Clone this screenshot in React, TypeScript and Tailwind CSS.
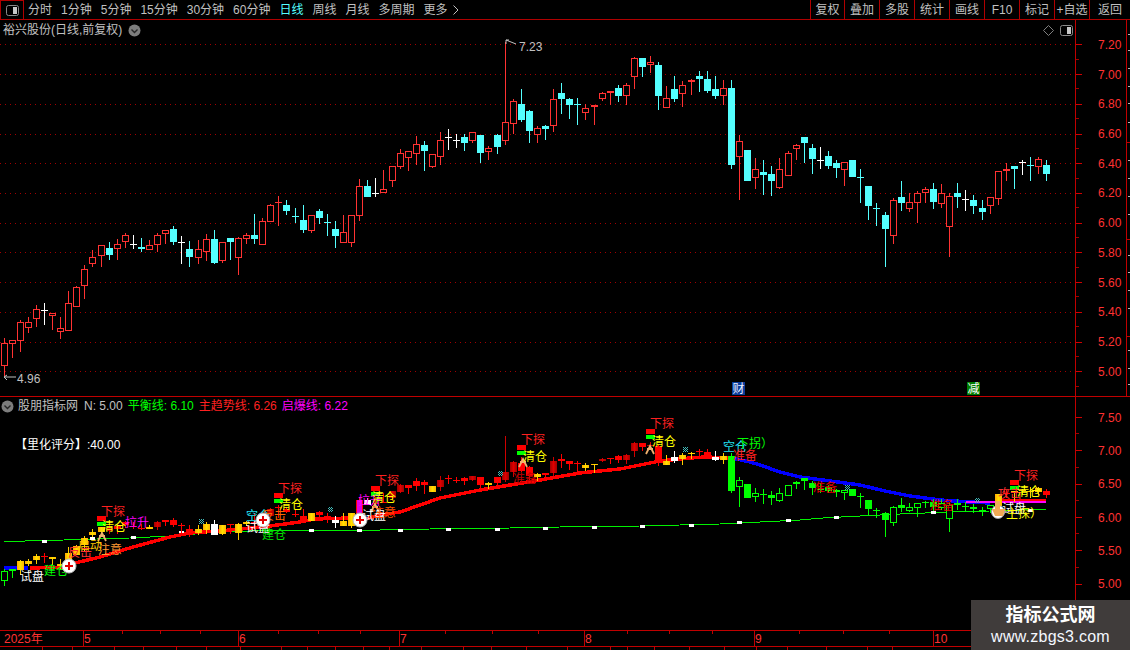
const SANS = "font-['Liberation_Sans','Noto_Sans_CJK_SC',sans-serif]";

type Row = [number, number, number, number, number, string];

const zoomA: Row[] = [
  [13, 415, 430, 497, 528, "r"], [37, 420, 421, 431, 473, "r"], [61, 361, 367, 422, 456, "r"], [85, 352, 367, 383, 399, "r"],
  [109, 316, 328, 356, 381, "r"], [133, 309, 331, 331, 375, "w"], [157, 339, 340, 347, 389, "r"], [181, 351, 385, 395, 417, "r"],
  [205, 274, 310, 392, 392, "r"], [229, 259, 262, 320, 320, "r"], [253, 196, 208, 257, 297, "r"], [277, 151, 172, 191, 201, "r"],
  [304, 135, 136, 167, 201, "r"], [328, 126, 145, 165, 180, "c"], [352, 117, 133, 146, 180, "r"], [376, 99, 106, 125, 144, "r"],
  [400, 105, 133, 133, 147, "w"], [424, 114, 141, 147, 156, "c"], [448, 121, 136, 150, 150, "r"], [472, 99, 106, 134, 157, "r"],
  [496, 90, 91, 101, 132, "r"], [520, 79, 87, 126, 135, "c"], [544, 108, 127, 127, 192, "w"], [568, 123, 147, 171, 201, "c"],
  [595, 120, 148, 174, 192, "r"], [619, 102, 118, 155, 183, "r"], [643, 90, 117, 189, 192, "c"], [667, 126, 127, 182, 189, "r"],
  [691, 114, 114, 126, 180, "c"], [715, 112, 115, 173, 225, "r"], [739, 99, 106, 116, 132, "r"], [763, 42, 105, 117, 132, "c"],
  [787, 54, 64, 134, 134, "r"], [811, 12, 16, 65, 67, "r"], [835, -12, 6, 10, 78, "f"], [859, 0, 15, 33, 45, "c"],
  [886, 24, 47, 49, 69, "c"], [910, 15, 60, 90, 99, "c"], [934, 45, 46, 92, 99, "r"], [958, 27, 33, 54, 72, "c"],
  [982, 42, 65, 67, 108, "c"], [1006, 63, 87, 108, 144, "c"], [1030, 45, 97, 128, 129, "r"], [1054, 45, 46, 128, 141, "r"],
  [1078, -63, -42, 47, 63, "r"], [1102, -60, -42, -9, -9, "c"], [1126, -66, -21, -21, -9, "w"],
];

const zoomB: Row[] = [
  [10, 420, 478, 488, 488, "r"], [37, 408, 409, 452, 471, "r"], [61, 358, 370, 410, 417, "r"], [85, 364, 364, 383, 423, "r"],
  [109, 318, 343, 371, 405, "r"], [133, 334, 346, 363, 423, "c"], [157, 373, 373, 410, 414, "r"], [181, 307, 331, 380, 405, "r"],
  [205, 297, 322, 322, 360, "w"], [229, 312, 330, 330, 354, "w"], [253, 312, 321, 339, 363, "c"], [277, 306, 307, 332, 339, "r"],
  [301, 315, 315, 369, 399, "c"], [325, 348, 355, 365, 390, "r"], [352, 313, 315, 351, 372, "c"], [376, 35, 277, 332, 345, "r"],
  [400, 208, 214, 281, 313, "r"], [424, 177, 222, 270, 276, "c"], [448, 240, 243, 303, 339, "c"], [472, 288, 295, 314, 339, "r"],
  [496, 285, 288, 297, 330, "c"], [520, 177, 208, 287, 306, "r"], [544, 159, 189, 207, 252, "c"], [568, 204, 207, 225, 267, "c"],
  [592, 204, 223, 223, 285, "c"], [616, 222, 235, 250, 270, "r"], [643, 225, 226, 232, 285, "r"], [667, 186, 190, 206, 213, "r"],
  [691, 183, 184, 190, 225, "r"], [715, 165, 174, 198, 216, "c"], [739, 159, 166, 197, 225, "r"], [763, 81, 85, 140, 177, "r"],
  [787, 84, 84, 111, 141, "c"], [811, 78, 97, 106, 129, "r"], [835, 96, 105, 198, 240, "c"], [859, 168, 205, 233, 233, "r"],
  [883, 138, 177, 207, 216, "c"], [907, 153, 166, 191, 231, "r"], [934, 148, 149, 157, 195, "r"], [958, 123, 138, 147, 186, "c"],
  [982, 123, 147, 183, 189, "c"], [1006, 138, 177, 198, 207, "c"], [1030, 150, 175, 197, 225, "r"], [1054, 150, 174, 405, 417, "c"],
  [1078, 315, 334, 380, 510, "r"], [1102, 360, 360, 453, 453, "c"], [1126, 384, 418, 443, 477, "r"],
];

const zoomC: Row[] = [
  [40, 90, 126, 135, 195, "c"], [64, 108, 132, 153, 198, "c"], [88, 84, 118, 173, 177, "r"], [115, 63, 70, 137, 137, "r"],
  [139, 42, 46, 56, 90, "r"], [163, 21, 21, 39, 99, "c"], [187, 42, 54, 87, 132, "c"], [211, 51, 89, 89, 117, "w"],
  [235, 63, 78, 108, 117, "c"], [259, 90, 99, 114, 144, "c"], [283, 96, 97, 119, 168, "r"], [307, 90, 90, 141, 141, "c"],
  [331, 117, 142, 142, 219, "c"], [355, 168, 168, 228, 270, "c"], [379, 219, 235, 235, 288, "c"], [406, 246, 255, 297, 411, "c"],
  [430, 205, 211, 319, 342, "r"], [454, 153, 201, 219, 243, "c"], [478, 189, 217, 236, 246, "r"], [502, 184, 190, 218, 280, "r"],
  [526, 171, 178, 190, 219, "r"], [550, 159, 177, 216, 237, "c"], [574, 162, 190, 221, 234, "r"], [598, 190, 199, 290, 381, "r"],
  [622, 159, 189, 201, 234, "c"], [646, 180, 208, 208, 243, "w"], [670, 195, 210, 228, 252, "c"], [697, 210, 234, 246, 270, "c"],
  [721, 201, 202, 227, 252, "r"], [745, 123, 124, 208, 225, "r"], [769, 99, 118, 124, 153, "r"], [793, 108, 108, 117, 177, "c"],
  [817, 90, 97, 97, 135, "w"], [841, 81, 106, 106, 153, "c"], [865, 81, 88, 110, 132, "r"], [889, 90, 105, 132, 153, "c"],
];

// lower pane colour for each candle
const lowerKinds =
  "ggyyyryyyy" + "yyydrrrryd" + "rrrryywyry" + "yrrdrrrryr" + "rwyyrwrrdd" +
  "rrrydrrrdr" + "yrddrryrdr" + "rryydrrddr" + "drywyyrrwy" + "GgGggGggGG" +
  "GgGGgGgGgG" + "gGgggGggGg" + "GGgyryyyyr";

const toPage = (rows: Row[], xo: number, yo: number) =>
  rows.map(([x, hi, top, bot, lo, kind]) => ({
    cx: Math.floor(xo + x / 3) + 0.5,
    hi: Math.round(yo + hi / 3),
    top: Math.round(yo + top / 3),
    bot: Math.round(yo + bot / 3),
    lo: Math.round(yo + lo / 3),
    kind,
  }));

const candles = [...toPage(zoomA, 0, 200), ...toPage(zoomB, 380, 30), ...toPage(zoomC, 750, 130)];

const toLower = (y: number) => Math.round(436.7 + 0.4489 * (y - 44.3));

const UpperCandles = () => (
  <g shapeRendering="crispEdges">
    {candles.map((c, i) => {
      const color = c.kind === "c" ? "#54ffff" : c.kind === "w" ? "#ffffff" : "#ff3232";
      const h = Math.max(c.bot - c.top, 1);
      return (
        <g key={i}>
          <rect x={c.cx - 0.5} y={c.hi} width={1} height={c.lo - c.hi} fill={color} />
          {c.kind === "r" ? (
            <rect x={c.cx - 3} y={c.top + 0.5} width={6} height={h - 1} fill="#000" stroke={color} strokeWidth={1} />
          ) : (
            <rect x={c.cx - 3.5} y={c.top} width={7} height={h} fill={color} />
          )}
        </g>
      );
    })}
  </g>
);

const lowerFill: Record<string, string> = {
  r: "#ff0000",
  d: "url(#darkRed)",
  y: "url(#gold)",
  w: "#ffffff",
  G: "#00ff00",
  g: "#000000",
};

const lowerWick: Record<string, string> = { r: "#ff0000", d: "#d00000", y: "#ffcc00", w: "#ffffff", G: "#00ff00", g: "#00ff00" };

const LowerCandles = () => (
  <g shapeRendering="crispEdges">
    {candles.map((c, i) => {
      const kind = lowerKinds[i];
      const hi = toLower(c.hi);
      const lo = toLower(c.lo);
      const top = toLower(c.top);
      const h = Math.max(toLower(c.bot) - top, 1);
      return (
        <g key={i}>
          <rect x={c.cx - 0.5} y={hi} width={1} height={Math.max(lo - hi, 1)} fill={lowerWick[kind]} />
          {kind === "g" && h > 1 ? (
            <rect x={c.cx - 3} y={top + 0.5} width={6} height={h - 1} fill="#000" stroke="#00ff00" />
          ) : (
            <rect x={c.cx - 3.5} y={top} width={7} height={h} fill={kind === "g" ? "#00ff00" : lowerFill[kind]} />
          )}
        </g>
      );
    })}
  </g>
);

const gridY = [44, 74, 104, 134, 163, 193, 223, 252, 282, 312, 342, 371];
const upperPrices = ["7.20", "7.00", "6.80", "6.60", "6.40", "6.20", "6.00", "5.80", "5.60", "5.40", "5.20", "5.00"];
const lowerPrices = ["7.50", "7.00", "6.50", "6.00", "5.50", "5.00"];

const periods = ["分时", "1分钟", "5分钟", "15分钟", "30分钟", "60分钟", "日线", "周线", "月线", "多周期"];
const tools = [
  ["复权", "w-[34px]"],
  ["叠加", "w-[35px]"],
  ["多股", "w-[35px]"],
  ["统计", "w-[35px]"],
  ["画线", "w-[35px]"],
  ["F10", "w-[35px]"],
  ["标记", "w-[35px]"],
  ["+自选", "w-[35px]"],
  ["返回", "w-[41px]"],
];

const greenLine =
  "4,542 25,541 64,540 130,538 170,536 220,532 250,531 380,530 430,529 510,528 560,527 640,526 720,524 760,522 800,520 823,518 860,516 900,514 950,512 990,511 1046,509";
const redLine =
  "30,568 70,567 75,563 100,557 133,547 170,537 190,533 230,530 250,528 270,526 300,522 315,519 350,518 365,519 380,515 400,512 440,498 480,490 510,485 540,480 580,473 620,469 660,461 690,458 705,457 732,458";
const blueLine =
  "732,458 750,462 760,465 780,472 800,477 830,481 860,485 885,491 910,496 940,500 970,502 990,503";

const greenTicks: [number, number][] = [
  [44, 541], [92, 538], [133, 537], [181, 532], [311, 530], [359, 530], [400, 530], [448, 529], [497, 529], [545, 528], [594, 527],
  [642, 526], [691, 525], [739, 522], [788, 520], [836, 517], [933, 512], [1030, 510],
];

const lowerLabels: [string, number, number, string][] = [
  ["试盘", 20, 576, "#ffffff"],
  ["建仓", 44, 570, "#00ff00"],
  ["注意", 98, 549, "#ff9933"],
  ["反击", 68, 552, "#ff3030"],
  ["启动", 78, 545, "#ffcc00"],
  ["下探", 101, 511, "#ff2020"],
  ["清仓", 102, 526, "#ffff00"],
  ["拉升", 125, 522, "#ff00ff"],
  ["空仓", 246, 515, "#22e0f0"],
  ["试盘", 246, 527, "#ffffff"],
  ["反击", 262, 515, "#ff6600"],
  ["建仓", 262, 534, "#00e000"],
  ["下探", 278, 488, "#ff2020"],
  ["清仓", 279, 504, "#ffff00"],
  ["拉升", 358, 500, "#ff00ff"],
  ["清仓", 372, 497, "#ffff00"],
  ["下探", 375, 480, "#ff2020"],
  ["试盘", 362, 515, "#ffffff"],
  ["注意", 372, 512, "#ff5000"],
  ["准备", 513, 478, "#c00000"],
  ["下探", 521, 439, "#ff2020"],
  ["清仓", 523, 456, "#ffff00"],
  ["下探", 650, 423, "#ff2020"],
  ["清仓", 652, 441, "#ffff00"],
  ["空仓", 723, 446, "#22e0f0"],
  ["下拐）", 737, 443, "#00ff00"],
  ["准备", 733, 455, "#ff2020"],
  ["准备", 813, 487, "#e00000"],
  ["准备", 930, 505, "#e00000"],
  ["下探", 1014, 475, "#ff2020"],
  ["攻击", 998, 493, "#ff3030"],
  ["清仓", 1017, 491, "#ffff00"],
  ["试盘", 1002, 508, "#ffffff"],
  ["主探）", 1006, 513, "#ffff00"],
];

const signalBars: [number, number][] = [[97, 516], [274, 493], [371, 486], [517, 445], [646, 429], [1010, 480]];
const plusMarks: [number, number][] = [[69, 566], [263, 520], [360, 520]];
const ditherMarks: [number, number][] = [[201, 521], [330, 509], [500, 473], [685, 449], [847, 487], [977, 500]];
const peakMarks: [number, number][] = [[102, 537], [375, 508], [523, 463], [650, 450]];

const months: [string, string][] = [
  ["2025年", "w-[83px] pl-[4px]"],
  ["5", "w-[155px]"],
  ["6", "w-[161px]"],
  ["7", "w-[185px]"],
  ["8", "w-[170px]"],
  ["9", "w-[179px]"],
  ["10", "w-[142px]"],
];
const monthTicks = [122, 160, 200, 278, 318, 360, 445, 492, 538, 627, 669, 712, 799, 843, 889];
const tabWidths = [43, 30, 42, 29, 33, 30, 34, 41, 26, 28, 28, 26, 32, 42, 28, 35, 41, 43, 17, 27, 35, 35, 32, 31, 39, 41, 25];

const PanelIcon = () => (
  <svg width="13" height="11" viewBox="0 0 13 11">
    <rect x="0.5" y="0.5" width="12" height="10" rx="2" fill="none" stroke="#8a8a8a" />
    <rect x="7" y="2" width="4" height="7" fill="#c8c8c8" />
  </svg>
);

const ChevronDot = () => (
  <svg width="13" height="13" viewBox="0 0 13 13">
    <circle cx="6.5" cy="6.5" r="6" fill="#7d7d7d" />
    <path d="M3.5 5.5 L6.5 8.5 L9.5 5.5" fill="none" stroke="#262626" strokeWidth="1.4" />
  </svg>
);

const Toolbar = () => (
  <div className="flex h-5 border-b border-[#b00000] text-[#c0c0c0]">
    <div className="flex w-[24px] items-center justify-center border border-b-0 border-[#b00000]">
      <PanelIcon />
    </div>
    <div className="ml-[4px] flex items-center gap-[9px]">
      {periods.map((p) => (
        <span key={p} className={p === "日线" ? "text-[#54ffff]" : ""}>
          {p}
        </span>
      ))}
      <span className="flex items-center gap-[5px]">
        更多
        <svg width="6" height="10" viewBox="0 0 6 10">
          <path d="M0.5 0.5 L5 5 L0.5 9.5" fill="none" stroke="#c0c0c0" />
        </svg>
      </span>
    </div>
    <div className="ml-auto flex">
      {tools.map(([t, w]) => (
        <div key={t} className={`flex items-center justify-center border-l border-[#b00000] ${w}`}>
          {t}
        </div>
      ))}
    </div>
  </div>
);

const UpperPane = () => (
  <div className="flex h-[377px] border-b border-[#c00000]">
    <div className="relative w-[1075px]">
      <svg width="1075" height="376" viewBox="0 20 1075 376" className={`block ${SANS}`}>
        {gridY.map((y) => (
          <line key={y} x1="0" x2="1075" y1={y + 0.5} y2={y + 0.5} stroke="#a00000" strokeDasharray="1 4" shapeRendering="crispEdges" />
        ))}
        <UpperCandles />
        <path d="M506 40 h3 M506 40 v4 M506 40 l10 4" fill="none" stroke="#c0c0c0" />
        <text x="519" y="51" fontSize="12" fill="#c0c0c0">7.23</text>
        <path d="M4 377 h12 M4 377 l3 -2 M4 377 l3 3" fill="none" stroke="#c0c0c0" />
        <text x="17" y="383" fontSize="12" fill="#c0c0c0">4.96</text>
        <rect x="732" y="382" width="13" height="13" fill="#0a3c9a" />
        <text x="732.5" y="393" fontSize="12" fill="#e8f0ff">财</text>
        <rect x="967" y="382" width="13" height="13" fill="#007c00" />
        <text x="967.5" y="393" fontSize="12" fill="#ffffff">减</text>
      </svg>
      <div className="absolute left-[3px] top-[2px] flex items-center gap-[6px] text-[#c0c0c0]">
        <span>裕兴股份(日线,前复权)</span>
        <ChevronDot />
      </div>
      <div className="absolute right-[2px] top-[5px] flex items-center gap-[6px]">
        <svg width="11" height="11" viewBox="0 0 11 11">
          <path d="M5.5 0.5 L10.5 5.5 L5.5 10.5 L0.5 5.5 Z" fill="none" stroke="#808080" />
        </svg>
        <PanelIcon />
      </div>
    </div>
    <PriceAxis prices={upperPrices} rowClass="h-[29.73px]" topClass="pt-[10px]" />
    <svg width="4" height="376" viewBox="0 20 4 376" className="absolute left-[1126px] top-[20px]">
      <line x1="0.5" x2="0.5" y1="20" y2="396" stroke="#c00000" />
      {[142, 239, 336].map((y) => (
        <line key={y} x1="0" x2="4" y1={y + 0.5} y2={y + 0.5} stroke="#c00000" />
      ))}
      {[34, 50, 68, 86, 103, 122, 160, 178, 196, 214, 255, 272, 290, 308, 350, 368, 384].map((y) => (
        <line key={y} x1="2" x2="4" y1={y + 0.5} y2={y + 0.5} stroke="#b8b8b8" />
      ))}
    </svg>
  </div>
);

const PriceAxis = ({ prices, rowClass, topClass }: { prices: string[]; rowClass: string; topClass: string }) => (
  <div className={`w-[55px] border-l border-[#c00000] ${topClass}`}>
    {prices.map((p) => (
      <div key={p} className={`relative flex items-center ${rowClass}`}>
        <div className="h-px w-[6px] bg-[#d00000]" />
        <span className="ml-[16px] text-[#ff3232]">{p}</span>
        <div className="absolute bottom-0 left-0 h-px w-[3px] bg-[#a00000]" />
      </div>
    ))}
  </div>
);

const LowerPane = () => (
  <div className="flex h-[233px]">
    <div className="relative w-[1075px]">
      <svg width="1075" height="233" viewBox="0 397 1075 233" className={`block ${SANS}`}>
        <defs>
          <linearGradient id="gold" x1="0" x2="1" y1="0" y2="0">
            <stop offset="0" stopColor="#ffa800" />
            <stop offset="0.5" stopColor="#ffe000" />
            <stop offset="1" stopColor="#ffb400" />
          </linearGradient>
          <linearGradient id="darkRed" x1="0" x2="1" y1="0" y2="0">
            <stop offset="0" stopColor="#a00000" />
            <stop offset="0.5" stopColor="#e00000" />
            <stop offset="1" stopColor="#a00000" />
          </linearGradient>
          <pattern id="dither" width="2" height="2" patternUnits="userSpaceOnUse">
            <rect width="1" height="1" fill="#3fb8b8" />
            <rect x="1" y="1" width="1" height="1" fill="#3fb8b8" />
          </pattern>
        </defs>
        <polyline points={greenLine} fill="none" stroke="#00f000" shapeRendering="crispEdges" />
        {greenTicks.map(([x, y]) => (
          <rect key={x} x={x - 2} y={y - 1} width="5" height="3" fill="#ffffff" />
        ))}
        <polyline points="4,568 28,568" fill="none" stroke="#0000ff" strokeWidth="3.5" shapeRendering="crispEdges" />
        <polyline points={redLine} fill="none" stroke="#ff0000" strokeWidth="3.5" shapeRendering="crispEdges" />
        <polyline points={blueLine} fill="none" stroke="#0000ff" strokeWidth="3.5" shapeRendering="crispEdges" />
        <polyline points="1000,501 1046,500" fill="none" stroke="#ff0000" strokeWidth="3" shapeRendering="crispEdges" />
        <polyline points="966,502 1046,502" fill="none" stroke="#ff00ff" strokeWidth="2" shapeRendering="crispEdges" />
        <LowerCandles />
        <rect x="357" y="500" width="5" height="15" fill="#e000e0" />
        {signalBars.map(([x, y]) => (
          <g key={x} shapeRendering="crispEdges">
            <rect x={x} y={y} width="9" height="5" fill="#ff0000" />
            <rect x={x} y={y + 6} width="9" height="4" fill="#00ff00" />
          </g>
        ))}
        {peakMarks.map(([x, y]) => (
          <path key={x} d={`M${x - 4} ${y + 4} L${x} ${y - 4} L${x + 4} ${y + 4} M${x - 3} ${y - 1} L${x + 3} ${y - 1}`} fill="none" stroke="#f0b070" strokeWidth="1.8" />
        ))}
        {ditherMarks.map(([x, y]) => (
          <rect key={x} x={x - 2} y={y - 2} width="5" height="5" fill="url(#dither)" />
        ))}
        {lowerLabels.map(([text, x, y, color], i) => (
          <text key={i} x={x} y={y + 4.5} fontSize="12" fill={color}>{text}</text>
        ))}
        {plusMarks.map(([x, y]) => (
          <g key={x}>
            <circle cx={x} cy={y} r="7" fill="#ffffff" stroke="#b8b8b8" />
            <path d={`M${x - 4} ${y} H${x + 4} M${x} ${y - 4} V${y + 4}`} stroke="#e00000" strokeWidth="2" />
          </g>
        ))}
        <circle cx="998" cy="512" r="6.5" fill="#ffffff" stroke="#a0a0a0" />
        <path d="M995 501 v8 h-3 l3 7 h8 l2 -7 h-5 v-8 z" fill="#f0aa55" />
      </svg>
      <div className={`absolute left-[1px] top-[1px] flex items-center gap-[5px] text-[#c0c0c0] ${SANS}`}>
        <ChevronDot />
        <span className="-ml-px">股朋指标网</span>
        <span className="ml-px">N: 5.00</span>
        <span className="text-[#00ff00]">平衡线: 6.10</span>
        <span className="text-[#ff2020]">主趋势线: 6.26</span>
        <span className="text-[#ff00ff]">启爆线: 6.22</span>
      </div>
      <div className="absolute left-[15px] top-[40px] text-white">【里化评分】:40.00</div>
    </div>
    <PriceAxis prices={lowerPrices} rowClass="h-[33.33px]" topClass="pt-[4px]" />
  </div>
);

const DateBar = () => (
  <div className="relative flex h-[17px] border-y border-[#c00000] text-[#ff3232]">
    {months.map(([m, w]) => (
      <div key={m} className={`flex items-center border-r-0 ${w} ${m === "2025年" ? "" : "border-l border-[#c00000]"}`}>
        {m}
      </div>
    ))}
    {monthTicks.map((x) => (
      <svg key={x} width="1" height="3" className="absolute" style={{ left: x, top: 0 }}>
        <rect width="1" height="3" fill="#c00000" />
      </svg>
    ))}
  </div>
);

const TabRow = () => (
  <div className="flex h-[4px] overflow-hidden">
    {tabWidths.map((w, i) => (
      <div key={i} className="h-full border-r border-[#c00000]" style={{ width: w }} />
    ))}
  </div>
);

const Watermark = () => (
  <div className="absolute left-[971px] top-[600px] flex h-[50px] w-[159px] flex-col items-center bg-[#403c3b] pt-[3px]">
    <div className="text-[18px] font-bold leading-[25px] text-white">指标公式网</div>
    <div className="text-[16px] leading-[18px] tracking-[0.25px] text-[#f4f8ff]">www.zbgs3.com</div>
  </div>
);

export default function App() {
  return (
    <div className={`relative h-[650px] w-[1130px] overflow-hidden bg-black text-[12px] leading-[16px] ${SANS}`}>
      <Toolbar />
      <UpperPane />
      <LowerPane />
      <DateBar />
      <TabRow />
      <Watermark />
    </div>
  );
}
